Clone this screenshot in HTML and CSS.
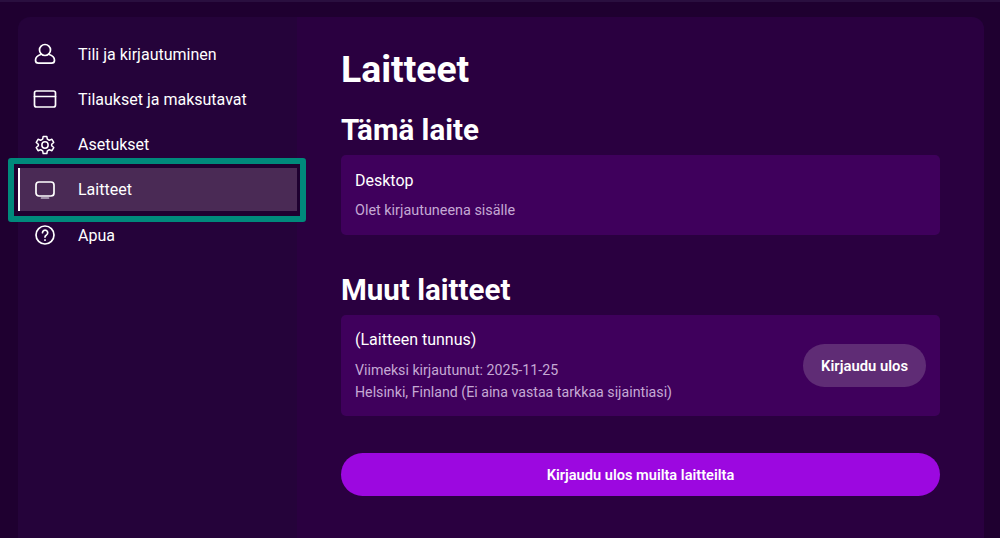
FILE: index.html
```html
<!DOCTYPE html>
<html>
<head>
  <meta charset="utf-8">
  <title>Laitteet</title>
  <link rel="stylesheet" href="styles.css">
</head>
<body>
  <div class="panel">
    <nav class="sidebar">
      <a class="nav-item">
        <svg class="nav-icon" viewBox="0 0 24 24"><circle cx="12" cy="8" r="5.500"/><path d="M8.300 12.200C5 13.200 2.500 15.500 2.500 18.200c0 2 1 3 3 3h13c2 0 3-1 3-3 0-2.700-2.500-5-5.800-6"/></svg>
        <span>Tili ja kirjautuminen</span>
      </a>
      <a class="nav-item">
        <svg class="nav-icon" viewBox="0 0 24 24"><rect x="1.500" y="4" width="21" height="16" rx="2"/><path d="M1.500 9.500h21"/></svg>
        <span>Tilaukset ja maksutavat</span>
      </a>
      <a class="nav-item">
        <svg class="nav-icon" viewBox="0 0 24 24"><g transform="translate(1.200 1.200) scale(.9)"><circle cx="12" cy="12" r="3.500"/><path d="M10 2.500h4l.6 3 2.200 1.200 2.900-1 2 3.500-2.300 2v1.600l2.300 2-2 3.500-2.900-1-2.200 1.200-.6 3h-4l-.6-3-2.200-1.200-2.900 1-2-3.500 2.300-2v-1.600l-2.300-2 2-3.500 2.900 1 2.200-1.200z"/></g></svg>
        <span>Asetukset</span>
      </a>
      <a class="nav-item active">
        <svg class="nav-icon" viewBox="0 0 24 24"><rect x="3" y="4" width="18" height="14" rx="3"/><path class="stand" d="M8.500 20h7"/></svg>
        <span>Laitteet</span>
      </a>
      <a class="nav-item">
        <svg class="nav-icon" viewBox="0 0 24 24"><circle cx="12" cy="12" r="9"/><path d="M9.500 9.700a2.600 2.600 0 1 1 4 2.200c-1 .6-1.500 1.200-1.500 2.200"/><path d="M12 16.900v.3"/></svg>
        <span>Apua</span>
      </a>
    </nav>
    <main class="content">
      <h1>Laitteet</h1>
      <h2>Tämä laite</h2>
      <div class="device-card">
        <div class="device-info">
          <div class="device-name">Desktop</div>
          <p class="device-meta current">Olet kirjautuneena sisälle</p>
        </div>
      </div>
      <h2 class="other-title">Muut laitteet</h2>
      <div class="device-card other">
        <div class="device-info">
          <div class="device-name">(Laitteen tunnus)</div>
          <p class="device-meta">Viimeksi kirjautunut: 2025-11-25<br>Helsinki, Finland (Ei aina vastaa tarkkaa sijaintiasi)</p>
        </div>
        <button class="logout-btn">Kirjaudu ulos</button>
      </div>
      <button class="logout-all">Kirjaudu ulos muilta laitteilta</button>
    </main>
  </div>
</body>
</html>
```

FILE: styles.css
```css
html,
body {
  height: 100%;
}

body {
  margin: 0;
  padding: 15px 16px 0 18px;
  box-sizing: border-box;
  overflow: hidden;
  background-color: #1f0030;
  border-top: 2px solid #2a0f3f;
  font-family: "Roboto", "Liberation Sans", sans-serif;
  color: #ffffff;
}

.panel {
  display: flex;
  height: 100%;
}

.sidebar {
  position: relative;
  z-index: 1;
  width: 279px;
  flex-shrink: 0;
  padding-top: 15.500px;
  box-sizing: border-box;
  background-color: #25033a;
  border-radius: 12px 0 0 0;
  display: flex;
  flex-direction: column;
  gap: 2.300px;
}

.nav-item {
  position: relative;
  display: flex;
  align-items: center;
  height: 43px;
  padding-left: 15px;
  font-size: 16px;
  color: #ffffff;
}

.nav-item span {
  margin-left: 21px;
}

.nav-icon {
  width: 24px;
  height: 24px;
  fill: none;
  stroke: #ffffff;
  stroke-width: 1.700;
  stroke-linejoin: round;
  stroke-linecap: round;
}

.nav-icon .stand {
  stroke: #bdb0c4;
}

.nav-item.active {
  background-color: #4a2a55;
  border-left: 2px solid #ffffff;
  padding-left: 13px;
  box-shadow: 0 0 0 5px #1f0030;
}

/* focus ring */
.nav-item.active::after {
  content: "";
  position: absolute;
  top: -10px;
  right: -9px;
  bottom: -11px;
  left: -12px;
  border: 6px solid #00897b;
  border-radius: 3px;
}

.content {
  flex: 1;
  padding: 30px 44px 0;
  background-color: #2a0040;
  border-radius: 0 12px 0 0;
}

h1 {
  margin: 0 0 22px;
  font-size: 37.300px;
  line-height: 44px;
  font-weight: 700;
}

h2 {
  margin: 0 0 8px;
  font-size: 29.500px;
  line-height: 34px;
  font-weight: 700;
}

.other-title {
  margin-top: 38px;
}

.device-card {
  display: flex;
  align-items: center;
  justify-content: space-between;
  padding: 14px 14px 13px;
  box-sizing: border-box;
  background-color: #3f005c;
  border-radius: 5px;
}

.device-card.other {
  padding-top: 13px;
}

.device-name {
  font-size: 16px;
  line-height: 24px;
}

.device-meta {
  margin: 7px 0 0;
  font-size: 14.200px;
  line-height: 22px;
  color: #c5a9d4;
}

.device-meta.current {
  font-size: 14.400px;
}

.logout-btn {
  height: 43px;
  padding: 0 18px;
  border: none;
  border-radius: 22px;
  background-color: #5f2c75;
  color: #ffffff;
  font-family: inherit;
  font-size: 14.800px;
  font-weight: 600;
}

.logout-all {
  display: block;
  width: 100%;
  height: 43px;
  margin-top: 37px;
  border: none;
  border-radius: 22px;
  background-color: #9c08e0;
  color: #ffffff;
  font-family: inherit;
  font-size: 14.600px;
  font-weight: 600;
}
```
